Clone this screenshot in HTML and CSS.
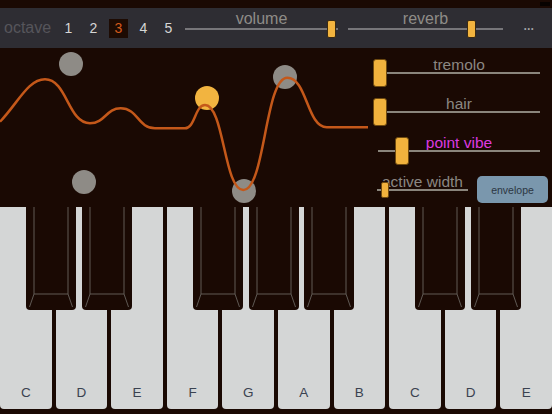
FILE: index.html
```html
<!DOCTYPE html>
<html lang="en">
<head>
    <meta charset="utf-8" />
    <title>Synth keyboard</title>
    <link rel="stylesheet" href="styles.css">
</head>
<body>
  <div id="app">
      <div class="status"><span class="battery"></span></div>

      <div class="toolbar">
          <span class="octave">octave</span>
          <div class="octaves">
              <span class="oct">1</span>
              <span class="oct">2</span>
              <span class="oct current">3</span>
              <span class="oct">4</span>
              <span class="oct">5</span>
          </div>
          <div class="tslider volume">
              <div class="tlabel">volume</div>
              <div class="track"><span class="thumb" style="left: 142px"></span></div>
          </div>
          <div class="tslider reverb">
              <div class="tlabel">reverb</div>
              <div class="track"><span class="thumb" style="left: 119px"></span></div>
          </div>
          <span class="more">&bull;&bull;&bull;</span>
      </div>

      <div class="stage">
          <svg class="wave" width="370" height="159" viewBox="0 0 370 159">
              <circle class="dot" cx="71" cy="16" r="12"/>
              <circle class="dot" cx="84" cy="134" r="12"/>
              <circle class="dot" cx="285" cy="29" r="12"/>
              <circle class="dot" cx="244" cy="143" r="12"/>
              <circle class="dot active" cx="207" cy="50" r="12"/>
              <path class="curve" d="M0 73.7 C18 55, 28 31.3, 45 31.3 C67 31.3, 68 75.3, 90 75.3 C105 75.3, 106 60.3, 120.7 60.3 C138 60.3, 138 80.3, 155 80.3 L185 80.3 C195 80.3, 195 57, 205 57 C224 57, 224 142, 243.3 142 C265 142, 265 29.7, 287.3 29.7 C307 29.7, 307 79.3, 326.7 79.3 L368 79.3"/>
          </svg>

          <div class="panel">
              <div class="pslider">
                  <div class="plabel">tremolo</div>
                  <div class="ptrack"><span class="pthumb" style="left: -5px"></span></div>
              </div>
              <div class="pslider">
                  <div class="plabel">hair</div>
                  <div class="ptrack"><span class="pthumb" style="left: -5px"></span></div>
              </div>
              <div class="pslider">
                  <div class="plabel vibe">point vibe</div>
                  <div class="ptrack"><span class="pthumb" style="left: 17px"></span></div>
              </div>
              <div class="prow">
                  <div class="pslider narrow">
                      <div class="plabel">active width</div>
                      <div class="ptrack"><span class="pthumb small" style="left: 4px"></span></div>
                  </div>
                  <button class="envelope">envelope</button>
              </div>
          </div>
      </div>

      <div class="keyboard">
          <div class="whites">
              <div class="white"><span>C</span></div>
              <div class="white"><span>D</span></div>
              <div class="white"><span>E</span></div>
              <div class="white"><span>F</span></div>
              <div class="white"><span>G</span></div>
              <div class="white"><span>A</span></div>
              <div class="white"><span>B</span></div>
              <div class="white"><span>C</span></div>
              <div class="white"><span>D</span></div>
              <div class="white"><span>E</span></div>
          </div>
          <div class="blacks">
              <div class="slot"><div class="black"><svg width="50" height="103"><path d="M8 0 V87 H42 V0 M8 87 L3.5 100 M42 87 L46.5 100"/></svg></div></div>
              <div class="slot"><div class="black"><svg width="50" height="103"><path d="M8 0 V87 H42 V0 M8 87 L3.5 100 M42 87 L46.5 100"/></svg></div></div>
              <div class="slot"></div>
              <div class="slot"><div class="black"><svg width="50" height="103"><path d="M8 0 V87 H42 V0 M8 87 L3.5 100 M42 87 L46.5 100"/></svg></div></div>
              <div class="slot"><div class="black"><svg width="50" height="103"><path d="M8 0 V87 H42 V0 M8 87 L3.5 100 M42 87 L46.5 100"/></svg></div></div>
              <div class="slot"><div class="black"><svg width="50" height="103"><path d="M8 0 V87 H42 V0 M8 87 L3.5 100 M42 87 L46.5 100"/></svg></div></div>
              <div class="slot"></div>
              <div class="slot"><div class="black"><svg width="50" height="103"><path d="M8 0 V87 H42 V0 M8 87 L3.5 100 M42 87 L46.5 100"/></svg></div></div>
              <div class="slot"><div class="black"><svg width="50" height="103"><path d="M8 0 V87 H42 V0 M8 87 L3.5 100 M42 87 L46.5 100"/></svg></div></div>
              <div class="slot"></div>
          </div>
      </div>
  </div>
</body>
</html>
```

FILE: styles.css
```css
body{
    margin: 0;
    background: #1a0903;
    font-family: "Liberation Sans", Arial, sans-serif;
}

#app{
    width: 552px;
    height: 414px;
    overflow: hidden;
}

.status{
    height: 8px;
    display: flex;
    justify-content: flex-end;
}

.battery{
    width: 10px;
    height: 4px;
    margin: 2px 2px 0 0;
    background: #070200;
}

/* top bar */

.toolbar{
    height: 40px;
    background: #2e2d33;
    display: flex;
    align-items: center;
    padding-left: 4px;
}

.octave{
    width: 55px;
    font-size: 16px;
    color: #56555b;
}

.octaves{
    display: flex;
    gap: 6px;
}

.oct{
    width: 19px;
    height: 19px;
    line-height: 19px;
    text-align: center;
    font-size: 14px;
    color: #d6d6d6;
}

.oct.current{
    background: #1d0b03;
    color: #d45a1c;
}

.tslider{
    align-self: stretch;
    padding-top: 3px;
}

.volume{
    width: 153px;
    margin-left: 7px;
}

.reverb{
    width: 155px;
    margin-left: 10px;
}

.tlabel{
    font-size: 16px;
    line-height: 16px;
    color: #8e8c88;
    text-align: center;
}

.track{
    position: relative;
    height: 2px;
    margin-top: 1px;
    background: #77767a;
}

.thumb{
    position: absolute;
    top: -8px;
    width: 9px;
    height: 18px;
    box-sizing: border-box;
    background: #f3b43f;
    border: 1px solid #3b2a12;
    border-radius: 2px;
}

.more{
    margin-left: 21px;
    font-size: 7px;
    letter-spacing: 1px;
    color: #a9a8ac;
}

/* wave area */

.stage{
    height: 159px;
    display: flex;
}

.wave{
    display: block;
    flex: none;
}

.dot{
    fill: #8e8b86;
}

.dot.active{
    fill: #f2b440;
}

.curve{
    fill: none;
    stroke: #c4581a;
    stroke-width: 2.5;
}

.panel{
    flex: 1;
    padding: 10px 12px 0 8px;
    display: flex;
    flex-direction: column;
    gap: 23px;
}

.plabel{
    font-size: 15.5px;
    line-height: 14px;
    color: #8b8782;
    text-align: center;
    white-space: nowrap;
}

.plabel.vibe{
    color: #dd3ae0;
}

.ptrack{
    position: relative;
    height: 2px;
    background: #8a857c;
}

.pthumb{
    position: absolute;
    top: -13px;
    width: 14px;
    height: 28px;
    box-sizing: border-box;
    background: #f1b23d;
    border: 1px solid #6e4a10;
    border-radius: 3px;
}

.pthumb.small{
    top: -7px;
    width: 8px;
    height: 16px;
    border-radius: 2px;
}

.prow{
    display: flex;
    align-items: flex-start;
    gap: 9px;
    margin: 0 -8px 0 -1px;
}

.narrow{
    width: 91px;
}

.envelope{
    margin-top: 1px;
    width: 71px;
    height: 27px;
    padding: 0;
    border: none;
    border-radius: 5px;
    background: #7a97ad;
    color: #2c3642;
    font-family: "Liberation Sans", Arial, sans-serif;
    font-size: 10.5px;
}

/* keys */

.keyboard{
    position: relative;
    height: 207px;
}

.whites{
    display: flex;
    gap: 4px;
    height: 202px;
}

.white{
    flex: 1;
    background: #d4d6d6;
    border-radius: 0 0 4px 4px;
    display: flex;
    align-items: flex-end;
    justify-content: center;
    padding-bottom: 9px;
    box-sizing: border-box;
}

.white span{
    font-size: 13.5px;
    line-height: 14px;
    color: #3a4250;
}

.blacks{
    position: absolute;
    top: 0;
    left: 0;
    right: 0;
    display: flex;
    gap: 4px;
}

.slot{
    flex: 1;
    min-width: 0;
}

.black{
    width: 50px;
    height: 103px;
    margin-left: 26.3px;
    background: #1a0903;
    border-radius: 0 0 4px 4px;
}

.black svg{
    display: block;
}

.black path{
    fill: none;
    stroke: #605a55;
    stroke-width: 1;
}
```
